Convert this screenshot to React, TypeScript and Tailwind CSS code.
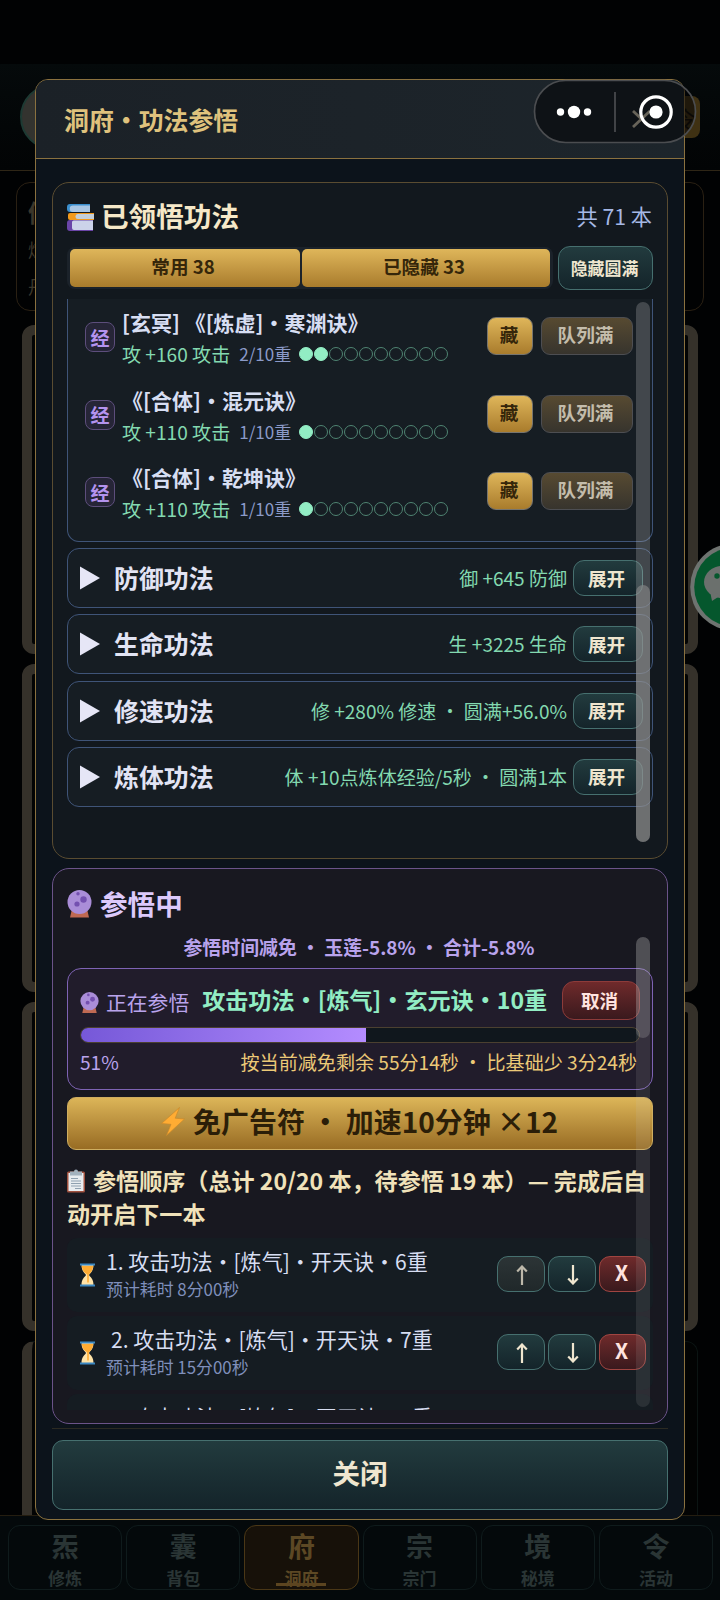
import type { ReactNode } from "react";

type Skill = {
  name: string;
  bonus: string;
  level: number;
};

type Group = {
  title: string;
  stat: string;
};

type QueueItem = {
  name: string;
  time: string;
  first?: boolean;
};

const skills: Skill[] = [
  { name: "[玄冥] 《[炼虚]・寒渊诀》", bonus: "攻 +160 攻击", level: 2 },
  { name: "《[合体]・混元诀》", bonus: "攻 +110 攻击", level: 1 },
  { name: "《[合体]・乾坤诀》", bonus: "攻 +110 攻击", level: 1 },
];

const groups: Group[] = [
  { title: "防御功法", stat: "御 +645 防御" },
  { title: "生命功法", stat: "生 +3225 生命" },
  { title: "修速功法", stat: "修 +280% 修速 ・ 圆满+56.0%" },
  { title: "炼体功法", stat: "体 +10点炼体经验/5秒 ・ 圆满1本" },
];

const queue: QueueItem[] = [
  { name: "1. 攻击功法・[炼气]・开天诀・6重", time: "预计耗时 8分00秒", first: true },
  { name: "2. 攻击功法・[炼气]・开天诀・7重", time: "预计耗时 15分00秒" },
  { name: "3. 攻击功法・[炼气]・开天诀・8重", time: "预计耗时 22分00秒" },
];

const navs = [
  { icon: "炁", label: "修炼" },
  { icon: "囊", label: "背包" },
  { icon: "府", label: "洞府" },
  { icon: "宗", label: "宗门" },
  { icon: "境", label: "秘境" },
  { icon: "令", label: "活动" },
];

function Books() {
  return (
    <svg width="28" height="28" viewBox="0 0 28 28">
      <path d="M3 1h20v8H3a3 3 0 0 1-3-3V4a3 3 0 0 1 3-3z" fill="#3b8fce" />
      <path d="M6 2.500h17V9H6a3 3 0 0 1 0-6.500z" fill="#a9c6e4" />
      <path d="M3 10h24v7H3a2 2 0 0 1-2-2v-3a2 2 0 0 1 2-2z" fill="#f29a1c" />
      <path d="M11 11h16v5H11a2.500 2.500 0 0 1 0-5z" fill="#c3cfda" />
      <path d="M3 17h23v11H3a3 3 0 0 1-3-3v-5a3 3 0 0 1 3-3z" fill="#6a45a8" />
      <path d="M7 17.500h19V27H7a2 2 0 0 1-2-2v-5a2 2 0 0 1 2-2.500z" fill="#ccd3ea" />
    </svg>
  );
}

function CrystalBall({ size }: { size: number }) {
  return (
    <svg width={size} height={(size * 28) / 25} viewBox="0 0 25 28">
      <path d="M3 27.500 4.500 21h16l1.500 6.500z" fill="#bf6952" />
      <circle cx="12.500" cy="12" r="12" fill="#aa8dd8" />
      <circle cx="11" cy="3.800" r="1.700" fill="#7450b0" />
      <circle cx="16.500" cy="9.500" r="3.200" fill="#7450b0" />
      <circle cx="10" cy="14" r="2.600" fill="#7450b0" />
    </svg>
  );
}

function Bolt() {
  return (
    <svg width="24" height="29" viewBox="0 0 24 29">
      <path d="M18.500.5.5 16.500l9.500.8L5.500 28.500l18-16.500-9.300-.8z" fill="#ffac33" stroke="#c98a2c" strokeWidth=".7" />
    </svg>
  );
}

function Clipboard() {
  return (
    <svg width="18" height="24" viewBox="0 0 18 24">
      <rect y="2.500" width="18" height="21" rx="1.500" fill="#a0503e" />
      <rect x="1.500" y="4" width="15" height="18" fill="#e8ecf0" />
      <path d="M3 2.500h4a2 2 0 0 1 4 0h4v4H3z" fill="#a3b2be" />
      <path d="M4 9.500h7M4 12h10M4 14.500h10M4 17h10M8 19.500h6" stroke="#8fa0b0" strokeWidth="1" />
    </svg>
  );
}

function Hourglass() {
  return (
    <svg width="15" height="24" viewBox="0 0 15 24">
      <path d="M1.500 2h12c0 5-2 7-4.300 9.500v1C11.500 15 13.500 17 13.500 22h-12c0-5 2-7 4.300-9.500v-1C3.500 9 1.500 7 1.500 2z" fill="#ffe3a8" />
      <path d="M1.800 3h11.400c-.4 4-2 6.300-4.400 8.500v8h-1.600v-8C3.800 9.300 2.200 7 1.800 3z" fill="#ffac33" />
      <path d="M0 .5h15v2H0zM0 21.500h15v2H0z" fill="#3b88c3" />
    </svg>
  );
}

function Arrow({ up }: { up?: boolean }) {
  return (
    <svg width="12" height="20" viewBox="0 0 12 20" fill="none" stroke="currentColor" strokeWidth="2.200">
      {up ? <path d="M6 20V1.500M1.200 6.500 6 1.500l4.800 5" /> : <path d="M6 0v18.500M1.200 13.500l4.800 5 4.800-5" />}
    </svg>
  );
}

function TealButton({ className, dim, children }: { className: string; dim?: boolean; children: ReactNode }) {
  return (
    <button
      className={`flex shrink-0 items-center justify-center border border-[#46706f] bg-linear-to-b font-bold ${dim ? "from-[#2c3436] to-[#20282a] text-[#bdb8aa]" : "from-[#223b3e] to-[#14242a] text-[#efe6cf]"} ${className}`}
    >
      {children}
    </button>
  );
}

function SkillRow({ skill }: { skill: Skill }) {
  return (
    <div className="flex h-[77.500px] items-start pl-[17px]">
      <div className="mt-[13px] flex size-[30px] shrink-0 items-center justify-center rounded-[8px] border border-[#5d4e7c] bg-[#262537] text-[19px] leading-none font-bold text-[#b493ee]">
        经
      </div>
      <div className="ml-[7px] w-[365px] shrink-0">
        <div className="h-[27px] text-[21px] leading-[27px] font-bold whitespace-nowrap text-[#d7def2]">{skill.name}</div>
        <div className="mt-[6px] flex h-[24px] items-center whitespace-nowrap">
          <span className="text-[19.100px] leading-[24px] text-[#83d9b0]">{skill.bonus}</span>
          <span className="ml-[9px] text-[17px] leading-[24px] text-[#8b9ac8]">{skill.level}/10重</span>
          <span className="ml-[8px] flex gap-px">
            {Array.from({ length: 10 }, (_, i) => (
              <span
                key={i}
                className={`size-[14px] rounded-full border ${i < skill.level ? "border-[#92edc4] bg-[#92edc4]" : "border-[#4f8472]"}`}
              />
            ))}
          </span>
        </div>
      </div>
      <button className="mt-[8px] h-[38px] w-[46px] shrink-0 rounded-[9px] border border-[#77756f] bg-linear-to-b from-[#dfb65a] to-[#a97c2c] pr-[2px] pb-[3px] text-[18.600px] leading-none font-bold text-[#35260a]">
        藏
      </button>
      <button className="mt-[8px] ml-[8px] h-[38px] w-[92px] shrink-0 rounded-[9px] border border-[#4d4e52] bg-linear-to-b from-[#574a31] to-[#37342d] pr-[3px] pb-[3px] text-[18.600px] leading-none font-bold text-[#c3bcab]">
        队列满
      </button>
    </div>
  );
}

function GroupRow({ group }: { group: Group }) {
  return (
    <div className="flex h-[60px] shrink-0 items-center rounded-[12px] border border-[#3f5478] bg-[#161d23] pr-[9px] pl-[12px]">
      <svg width="20" height="24" viewBox="0 0 20 24">
        <path d="M0 .5l20 11.500L0 23.500z" fill="#e6e6f6" />
      </svg>
      <span className="mt-[-2px] ml-[14px] text-[24.900px] leading-[30px] font-bold text-[#e2e4f4]">{group.title}</span>
      <span className="ml-auto text-[19.050px] leading-[30px] whitespace-pre text-[#83d9b0]">{group.stat}</span>
      <TealButton className="ml-[6px] h-[36px] w-[70px] rounded-[11px] pr-[3px] pb-px text-[18.600px]">展开</TealButton>
    </div>
  );
}

function QueueRow({ item }: { item: QueueItem }) {
  return (
    <div className="flex h-[74px] shrink-0 items-center rounded-[10px] bg-[#151c22] pr-[7px] pl-[13px]">
      <Hourglass />
      <div className="ml-[11px] flex-1 whitespace-nowrap">
        <div className={`text-[21.050px] leading-[28px] text-[#d7def2] ${item.first ? "" : "pl-[5px]"}`}>{item.name}</div>
        <div className="text-[16.900px] leading-[28px] text-[#7f8fbb]">{item.time}</div>
      </div>
      <div className="mb-[2px] flex gap-[3px]">
        <TealButton dim={item.first} className="h-[36px] w-[48px] rounded-[11px] pt-px pl-[2px]">
          <Arrow up />
        </TealButton>
        <TealButton className="h-[36px] w-[48px] rounded-[11px] pt-px pl-[2px]">
          <Arrow />
        </TealButton>
        <button className="h-[36px] w-[47px] rounded-[11px] border border-[#a04541] bg-linear-to-b from-[#6f2a2b] to-[#3a191d] pr-[2px] pb-[3px] text-[21px] leading-none font-bold text-[#ffe3df]">
          X
        </button>
      </div>
    </div>
  );
}

// 弹窗后面的页面（已压暗）
function Backdrop() {
  return (
    <div className="flex h-[1600px] flex-col">
      <div className="h-[64px] bg-[#010203]" />
      <div className="flex h-[107px] items-center justify-between border-b border-[#2f2616] bg-linear-to-b from-[#050a0b] to-[#020405] pr-[20px] pl-[20px]">
        <div className="size-[66px] rounded-full border-2 border-[#1d3a33] bg-[#33332f]" />
        <div className="flex h-[42px] w-[42px] items-center justify-end rounded-[8px] bg-[#3f3113] pr-1 text-[22px] text-[#14100a]">令</div>
      </div>
      <div className="mx-[16px] mt-[11px] flex h-[129px] flex-col rounded-[14px] border border-[#2a2013] pt-[11px] pl-[11px] text-[#3b362b]">
        <span className="text-[24px] leading-[36px] font-bold">修士</span>
        <span className="text-[18px] leading-[38px]">炼气</span>
        <span className="text-[18px] leading-[36px]">丹药</span>
      </div>
      <div className="mt-[14px] flex h-[1190px] flex-col gap-[10px] overflow-hidden px-[22px]">
        <div className="h-[329px] shrink-0 rounded-[12px] border-[10px] border-[#35312a] bg-[#020303]" />
        <div className="h-[328px] shrink-0 rounded-[12px] border-[10px] border-[#35312a] bg-[#020303]" />
        <div className="h-[329px] shrink-0 rounded-[12px] border-[10px] border-[#35312a] bg-[#020303]" />
        <div className="h-[329px] shrink-0 rounded-[12px] border border-l-[10px] border-[#0b1413] border-l-[#35312a] bg-[#020303]" />
      </div>
      <div className="flex h-[85px] gap-[4px] border-t border-[#241d10] bg-[#04090b] pr-[7px] pl-[8px] pt-[9px]">
        {navs.map((nav) => (
          <div
            key={nav.label}
            className={`relative flex h-[65px] flex-1 flex-col items-center rounded-[12px] border ${nav.label === "洞府" ? "border-[#4a3716] bg-[#171109] text-[#5c4824]" : "border-[#0f1b1c] bg-[#04090b] text-[#2a3535]"}`}
          >
            <span className="mt-[2px] text-[27px] leading-[36px] font-bold">{nav.icon}</span>
            <span className="text-[17px] leading-[28px] font-bold">{nav.label}</span>
            {nav.label === "洞府" && <span className="absolute bottom-[3px] h-[3px] w-[50px] bg-[#5c4520]" />}
          </div>
        ))}
      </div>
    </div>
  );
}

function WeChatFloat() {
  return (
    <svg className="absolute top-[543px] left-[690px]" width="30" height="88" viewBox="0 0 30 88">
      <circle cx="43.700" cy="44" r="43.500" fill="#6e7370" />
      <circle cx="43.700" cy="44" r="39.500" fill="#05572d" />
      <ellipse cx="32" cy="39" rx="18" ry="16" fill="#6b706d" />
      <path d="M20 48l2 10 9-6z" fill="#6b706d" />
      <circle cx="27" cy="33" r="2.700" fill="#05572d" />
    </svg>
  );
}

function Capsule() {
  return (
    <svg className="absolute top-[79px] left-[533px]" width="164" height="66" viewBox="0 0 164 66">
      <rect x="1.500" y="1.500" width="161" height="62" rx="31" fill="#020203" fillOpacity=".52" stroke="#4b4d50" strokeWidth="1.700" />
      <circle cx="27.500" cy="33" r="3.700" fill="#fff" />
      <circle cx="41" cy="33" r="6.200" fill="#fff" />
      <circle cx="54.500" cy="33" r="3.700" fill="#fff" />
      <path d="M82 13v40" stroke="#4b4d50" strokeWidth="1.700" />
      <circle cx="123" cy="33" r="15.200" fill="none" stroke="#fff" strokeWidth="3.200" />
      <circle cx="123" cy="33" r="6.600" fill="#fff" />
    </svg>
  );
}

export default function App() {
  return (
    <div className="relative h-[1600px] w-[720px] overflow-hidden bg-[#010203] font-['Noto_Sans_CJK_SC',sans-serif]">
      <Backdrop />
      <WeChatFloat />

      <div className="absolute top-[79px] left-[35px] flex h-[1441px] w-[650px] flex-col overflow-hidden rounded-[13px] border border-[#8a713f] bg-[#0c131b]">
        <div className="flex h-[79px] shrink-0 items-center justify-between border-b border-[#8a713f] bg-linear-to-r from-[#1b2127] to-[#1d252b] pr-[33px] pl-[28px]">
          <span className="mt-px text-[24.900px] leading-none font-bold text-[#dfc27d]">洞府・功法参悟</span>
          <svg width="19" height="18" viewBox="0 0 19 18">
            <path d="M1 1l17 16M18 1L1 17" stroke="#d6cdb6" strokeWidth="2.800" />
          </svg>
        </div>

        {/* 已领悟功法 */}
        <section className="relative mx-[16px] mt-[23px] flex h-[677px] shrink-0 flex-col rounded-[17px] border border-[#5a4c31] bg-[#12181e] px-[14px]">
          <div className="mt-[16px] flex h-[36px] items-center">
            <Books />
            <span className="mt-[-2px] ml-[6px] text-[27.600px] leading-none font-bold text-[#f5e8c8]">已领悟功法</span>
            <span className="mt-[-2px] mr-px ml-auto text-[21.200px] leading-none text-[#a5b8e6]">共 71 本</span>
          </div>
          <div className="mt-[11px] flex h-[44px] items-center gap-[5px]">
            <div className="flex h-[42px] w-[486px] gap-[2px] rounded-[8px] bg-[#1b222a] px-[3px] py-[2px] text-[18.600px] font-bold text-[#35260a]">
              <button className="w-[230px] rounded-[5px] bg-linear-to-b from-[#dfb65a] to-[#a97c2c] pr-[4px] pb-[3px] leading-none">常用 38</button>
              <button className="flex-1 rounded-[5px] bg-linear-to-b from-[#dfb65a] to-[#a97c2c] pr-[4px] pb-[3px] leading-none">已隐藏 33</button>
            </div>
            <TealButton className="h-[44px] flex-1 rounded-[12px] pr-[2px] text-[16.900px]">隐藏圆满</TealButton>
          </div>
          <div className="mt-[9px] flex h-[543px] flex-col gap-[6.200px] overflow-hidden">
            <div className="h-[243px] shrink-0 rounded-b-[12px] border border-t-0 border-[#3f5478] bg-[#161d23] pt-[10px]">
              {skills.map((skill) => (
                <SkillRow key={skill.name} skill={skill} />
              ))}
            </div>
            {groups.map((group) => (
              <GroupRow key={group.title} group={group} />
            ))}
          </div>
          <div className="absolute top-[119px] right-[17px] h-[540px] w-[14px] rounded-full bg-[#c8c8c8]/25">
            <div className="absolute bottom-0 h-[257px] w-[14px] rounded-full bg-[#8c8c8c]/60" />
          </div>
        </section>

        {/* 参悟中 */}
        <section className="relative mx-[16px] mt-[9px] flex h-[556px] shrink-0 flex-col rounded-[17px] border border-[#6b5389] bg-[#181820] px-[14px]">
          <div className="mt-[17px] flex h-[36px] items-center">
            <CrystalBall size={25} />
            <span className="mt-[-1px] ml-[8px] text-[27.600px] leading-none font-bold text-[#dcc9fb]">参悟中</span>
          </div>
          <div className="mt-[12px] flex h-[476px] flex-col overflow-hidden">
            <div className="h-[34px] shrink-0 pr-[2px] text-center text-[18.900px] leading-[26px] font-bold text-[#b9a3ec]">
              参悟时间减免 ・ 玉莲-5.8% ・ 合计-5.8%
            </div>
            <div className="flex h-[122px] shrink-0 flex-col rounded-[14px] border border-[#7e63b4] bg-[#211c2b] px-[12px] pt-[12px]">
              <div className="flex h-[39px] items-center whitespace-nowrap">
                <span className="mt-[4px]">
                  <CrystalBall size={19} />
                </span>
                <span className="mt-[4px] ml-[7px] text-[20.800px] leading-none text-[#b9a3ec]">正在参悟</span>
                <span className="mt-[-2px] ml-[13px] text-[23.100px] leading-none font-bold text-[#92edc4]">攻击功法・[炼气]・玄元诀・10重</span>
                <button className="ml-auto h-[39px] w-[78px] rounded-[12px] border border-[#8d3b3a] bg-linear-to-b from-[#6f2a2b] to-[#3a191d] pr-[3px] pb-px text-[18.600px] leading-none font-bold text-[#ffe3df]">
                  取消
                </button>
              </div>
              <div className="mt-[7px] h-[16px] overflow-hidden rounded-full border border-[#4b4030] bg-[#10171d]">
                <div className="h-full w-[51%] bg-linear-to-r from-[#7658d8] to-[#b48cff]" />
              </div>
              <div className="mt-[5px] flex justify-between pr-[3px] text-[19.080px] leading-[28px]">
                <span className="text-[#b9a3ec]">51%</span>
                <span className="text-[#ecc977]">按当前减免剩余 55分14秒 ・ 比基础少 3分24秒</span>
              </div>
            </div>
            <button className="mt-[7px] flex h-[53px] shrink-0 items-center justify-center gap-[8px] rounded-[9px] border border-[#cfae60] bg-linear-to-b from-[#dcb558] to-[#986c23] pr-px pb-[5px] text-[28px] leading-none font-bold text-[#2b1e08]">
              <Bolt />
              免广告符 ・ 加速10分钟 ×12
            </button>
            <div className="mt-[14px] h-[66px] shrink-0 text-[23.080px] leading-[33px] font-bold whitespace-nowrap text-[#f0e2ba]">
              <span className="mr-[8px] inline-block align-[-3px]">
                <Clipboard />
              </span>
              参悟顺序（总计 20/20 本，待参悟 19 本）— 完成后自
              <br />
              动开启下一本
            </div>
            <div className="mt-[8px] flex flex-col gap-[4px]">
              {queue.map((item) => (
                <QueueRow key={item.name} item={item} />
              ))}
            </div>
          </div>
          <div className="absolute top-[68px] right-[17px] h-[470px] w-[14px] rounded-full bg-[#c8c8c8]/12">
            <div className="h-[101px] w-[14px] rounded-full bg-[#c8c8c8]/22" />
          </div>
        </section>

        <div className="mx-[16px] mt-[4px] border-t border-[#2b2a22] pt-[11px]">
          <TealButton className="h-[70px] w-full rounded-[11px] pb-[4px] text-[27.600px]">关闭</TealButton>
        </div>
      </div>

      <Capsule />
    </div>
  );
}
